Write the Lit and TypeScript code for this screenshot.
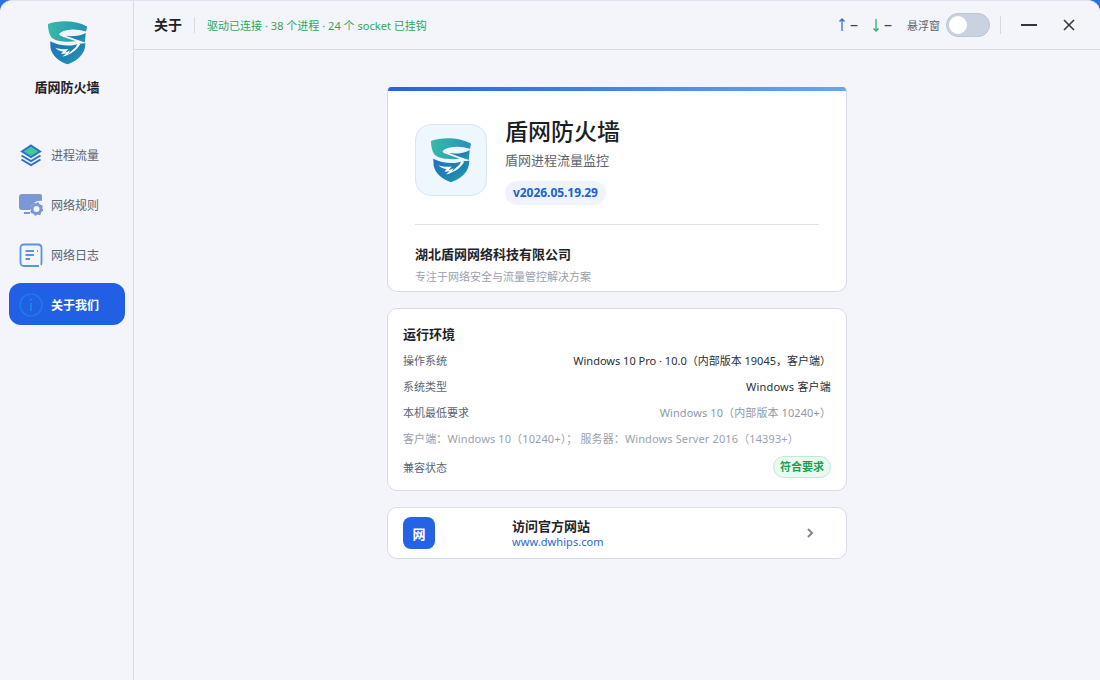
import { LitElement, html, css, svg } from "lit";
import { customElement } from "lit/decorators.js";

const shield = () => svg`
<defs>
<linearGradient id="sa" x1="0" y1="0" x2="1" y2="0"><stop offset="0" stop-color="#38b9a8"/><stop offset=".6" stop-color="#2ba3b2"/><stop offset="1" stop-color="#2a8fbc"/></linearGradient>
<linearGradient id="sb" x1="0" y1="0" x2="1" y2="1"><stop offset="0" stop-color="#2270c0"/><stop offset=".6" stop-color="#1f84b4"/><stop offset="1" stop-color="#26a8a8"/></linearGradient>
</defs>
<path fill="url(#sa)" d="M15 30 C50 18 100 18 137 38 L134 54 C105 45 75 45 56 56 C46 62 50 66 62 70 L102 84 C70 88 40 84 26 72 C18 62 15 45 15 30Z"/>
<path fill="url(#sb)" d="M133 58 L130 88 L108 80 L70 67 C90 70 115 68 133 58Z"/>
<path fill="url(#sb)" d="M22 84 C40 94 65 99 90 97 L112 92 L132 90 L130 105 C125 130 100 148 76 156 C50 148 27 128 23 105Z"/>
<path fill="#fff" d="M38 104 C50 108 64 110 78 108 L68 120 L84 113 L78 124 L102 102 L108 90 L116 93 C110 104 100 114 90 120 L70 130 L60 132 L72 122 L56 124 L62 116 C52 114 42 110 38 104Z"/>
`;

@customElement("app-root")
export class AppRoot extends LitElement {
  static styles = css`
    :host { display: block; width: 1100px; height: 680px; background: #2f6fe0; font-family: "Noto Sans", "Noto Sans CJK SC", sans-serif; color: #1f2329; overflow: hidden; }
    * { box-sizing: border-box; }
    .win { width: 1100px; height: 680px; background: #f3f5fb; border-radius: 12px 12px 0 0; display: flex; overflow: hidden; border-top: 1px solid #dfe3ef; }
    .side { width: 134px; flex: none; border-right: 1px solid #d5daea; display: flex; flex-direction: column; padding: 19px 8px 0 9px; }
    .brand { display: flex; flex-direction: column; align-items: center; gap: 12px; margin-bottom: 36px; }
    .brand svg { width: 41px; height: 45px; }
    .brand span { font-size: 13px; font-weight: 700; line-height: 20px; color: #1f2329; }
    .nav { display: flex; flex-direction: column; gap: 8px; }
    .item { height: 42px; border-radius: 12px; display: flex; align-items: center; gap: 8px; padding: 2px 0 0 10px; font-size: 12px; color: #5c6470; }
    .item svg { width: 24px; height: 24px; flex: none; }
    .item.on { background: #2160e4; color: #fff; font-weight: 700; }
    .main { flex: 1; display: flex; flex-direction: column; min-width: 0; }
    .top { height: 49px; flex: none; border-bottom: 1px solid #d5daea; display: flex; align-items: center; padding-left: 20px; }
    .top h1 { margin: 0; font-size: 14px; font-weight: 700; line-height: 20px; color: #1f2329; }
    .sep { width: 1px; height: 16px; background: #d5d9e3; margin: 0 12px; flex: none; }
    .status { font-size: 11px; color: #2ca85c; line-height: 16px; padding-top: 1px; letter-spacing: .02px; }
    .right { margin-left: auto; display: flex; align-items: center; }
    .speed { font-size: 16px; line-height: 16px; color: #3c4149; display: flex; align-items: center; gap: 4px; }
    .speed svg { width: 8px; height: 14px; }
    .speed span { margin-top: -2px; }
    .speed.up { margin-right: 14px; }
    .speed.down { margin-right: 15px; }
    .float { font-size: 11px; color: #5c6470; margin-right: 6px; }
    .toggle { width: 44px; height: 24px; border-radius: 12px; background: #c9d2e0; border: 1px solid #bcc6d6; position: relative; }
    .knob { position: absolute; left: 2px; top: 2px; width: 18px; height: 18px; border-radius: 50%; background: #fff; }
    .sep2 { width: 1px; height: 18px; background: #d5d9e3; margin: 0 20px 0 10px; }
    .min { width: 16px; height: 1.5px; background: #30343c; margin-right: 26px; }
    .close { width: 12px; height: 12px; margin-right: 25px; display: block; }
    .content { flex: 1; display: flex; flex-direction: column; align-items: center; padding-top: 37px; gap: 16px; }
    .card { width: 460px; background: #fff; border: 1px solid #d8dce8; border-radius: 10px; }
    .about { height: 205px; overflow: hidden; border-radius: 4px 4px 10px 10px; border-top: 0; display: flex; flex-direction: column; }
    .bar { height: 4px; flex: none; background: linear-gradient(90deg, #2563dc, #6aa5f0); }
    .head { display: flex; gap: 18px; margin: 0 27px; padding: 24px 0 20px; border-bottom: 1px solid #dfe2e9; height: 134px; flex: none; }
    .appicon { width: 72px; height: 72px; margin-top: 9px; flex: none; border-radius: 16px; background: #eef6fe; border: 1px solid #d9e6f5; display: flex; align-items: center; justify-content: center; }
    .appicon svg { width: 42px; height: 46px; }
    .meta { display: flex; flex-direction: column; align-items: flex-start; }
    .name { font-size: 23px; font-weight: 500; line-height: 32px; color: #1a1e25; }
    .desc { font-size: 13px; line-height: 20px; margin-top: 3px; color: #5c6470; }
    .ver { font-size: 12px; font-weight: 700; color: #2160d0; background: #eef3fd; border-radius: 12px; padding: 0 8px; height: 24px; line-height: 24px; margin-top: 11px; letter-spacing: -.05px; }
    .co { margin: 0 27px; padding-top: 19px; }
    .co b { display: block; font-size: 13px; line-height: 20px; font-weight: 700; color: #1f2329; }
    .co span { display: block; font-size: 11px; line-height: 16px; margin-top: 5px; color: #9aa1ad; }
    .env { height: 183px; padding: 14px 15px 0; }
    .env h2 { margin: 0 0 2px; font-size: 13px; font-weight: 700; line-height: 22px; color: #1f2329; }
    .row { height: 26px; display: flex; justify-content: space-between; align-items: center; font-size: 11px; color: #5c6470; }
    .row .v { color: #2a2f37; }
    .row .w { letter-spacing: .2px; }
    .row .m { color: #8e98a8; letter-spacing: .1px; }
    .note { height: 26px; display: flex; align-items: center; font-size: 11px; color: #9aa1ad; letter-spacing: .12px; white-space: pre; }
    .ok { font-size: 11px; font-weight: 700; color: #1f9d50; background: #eafaf1; border: 1px solid #bdecd2; border-radius: 11px; height: 22px; line-height: 20px; padding: 0 6px; }
    .row.last { margin-top: 3px; }
    .link { height: 52px; display: flex; align-items: center; padding: 0 15px; position: relative; }
    .net { width: 32px; height: 32px; border-radius: 8px; background: #2563e6; color: #fff; font-size: 13px; font-weight: 700; display: flex; align-items: center; justify-content: center; flex: none; }
    .linkt { margin-left: 77px; display: flex; flex-direction: column; flex: 1; }
    .linkt b { font-size: 13px; line-height: 18px; font-weight: 700; color: #1f2329; }
    .linkt span { font-size: 11px; line-height: 14px; color: #2f66cc; letter-spacing: .07px; }
    .chev { width: 8px; height: 10px; margin-right: 17px; }
  `;

  render() {
    return html`
      <div class="win">
        <aside class="side">
          <div class="brand">
            <svg viewBox="12 18 128 140">${shield()}</svg>
            <span>盾网防火墙</span>
          </div>
          <nav class="nav">
            <div class="item">
              <svg viewBox="0 0 24 24" fill="none" stroke="#2f6ed0" stroke-width="2">
                <path d="M12 2.5 L21 8.5 L12 14 L3 8.5Z" fill="#3ecb95"/>
                <path d="M2.5 12.5 L12 18 L21.5 12.5"/>
                <path d="M2.5 16.5 L12 22 L21.5 16.5"/>
              </svg>进程流量
            </div>
            <div class="item">
              <svg viewBox="0 0 24 24">
                <path d="M3 1 H21 Q23 1 23 3 V8 C17 7 12 11 11 17 H3 Q0 17 0 14 V4 Q0 1 3 1Z" fill="#7b97d6"/>
                <path d="M5 20 H11" stroke="#7b97d6" stroke-width="2"/>
                <circle cx="17.5" cy="16" r="4.5" fill="none" stroke="#7b97d6" stroke-width="3"/>
                <circle cx="17.5" cy="16" r="6" fill="none" stroke="#7b97d6" stroke-width="1.6" stroke-dasharray="2 2.7"/>
              </svg>网络规则
            </div>
            <div class="item">
              <svg viewBox="0 0 24 24" fill="none" stroke="#5a93e4" stroke-width="1.8">
                <path d="M20 23 H5 Q1.5 23 1.5 19 V5 Q1.5 1.5 5 1.5 H19 Q22.5 1.5 22.5 5 V19 Q22.5 21 22 22"/>
                <path d="M6.5 8 H15 M6.5 12 H15 M6.5 16 H11 M18 8 H19"/>
              </svg>网络日志
            </div>
            <div class="item on">
              <svg viewBox="0 0 24 24" fill="none" stroke="#1a82e6" stroke-width="1.2">
                <circle cx="12" cy="12" r="11"/>
                <path d="M12 10 V18" stroke-width="2"/>
                <circle cx="12" cy="6.5" r="1.2" fill="#1a82e6" stroke="none"/>
              </svg>关于我们
            </div>
          </nav>
        </aside>
        <div class="main">
          <header class="top">
            <h1>关于</h1>
            <i class="sep"></i>
            <span class="status">驱动已连接 · 38 个进程 · 24 个 socket 已挂钩</span>
            <div class="right">
              <div class="speed up">
                <svg viewBox="0 0 8 14" fill="none" stroke="#2f6fe0" stroke-width="1.3"><path d="M4 13 V1 M1.5 3.5 L4 1 L6.5 3.5"/></svg><span>–</span>
              </div>
              <div class="speed down">
                <svg viewBox="0 0 8 14" fill="none" stroke="#25b468" stroke-width="1.3"><path d="M4 1 V13 M1.5 10.5 L4 13 L6.5 10.5"/></svg><span>–</span>
              </div>
              <span class="float">悬浮窗</span>
              <div class="toggle"><div class="knob"></div></div>
              <i class="sep2"></i>
              <i class="min"></i>
              <svg class="close" viewBox="0 0 12 12" stroke="#30343c" stroke-width="1.5"><path d="M1 1 L11 11 M11 1 L1 11"/></svg>
            </div>
          </header>
          <main class="content">
            <section class="card about">
              <div class="bar"></div>
              <div class="head">
                <div class="appicon"><svg viewBox="12 18 128 140">${shield()}</svg></div>
                <div class="meta">
                  <div class="name">盾网防火墙</div>
                  <div class="desc">盾网进程流量监控</div>
                  <div class="ver">v2026.05.19.29</div>
                </div>
              </div>
              <div class="co">
                <b>湖北盾网网络科技有限公司</b>
                <span>专注于网络安全与流量管控解决方案</span>
              </div>
            </section>
            <section class="card env">
              <h2>运行环境</h2>
              <div class="row"><span>操作系统</span><span class="v">Windows 10 Pro · 10.0（内部版本 19045，客户端）</span></div>
              <div class="row"><span>系统类型</span><span class="v w">Windows 客户端</span></div>
              <div class="row"><span>本机最低要求</span><span class="m">Windows 10（内部版本 10240+）</span></div>
              <div class="note">客户端：Windows 10（10240+）； 服务器：Windows Server 2016（14393+）</div>
              <div class="row last"><span>兼容状态</span><span class="ok">符合要求</span></div>
            </section>
            <section class="card link">
              <div class="net">网</div>
              <div class="linkt"><b>访问官方网站</b><span>www.dwhips.com</span></div>
              <svg class="chev" viewBox="0 0 8 10" fill="none" stroke="#7d8794" stroke-width="2"><path d="M2 1 L6 5 L2 9"/></svg>
            </section>
          </main>
        </div>
      </div>
    `;
  }
}
